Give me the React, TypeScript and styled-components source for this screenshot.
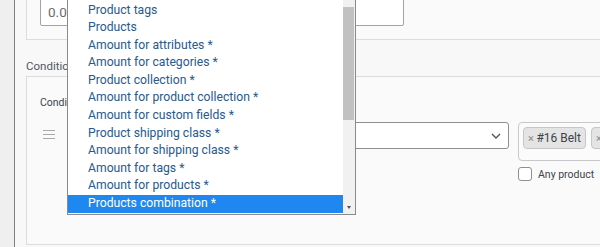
import styled, { createGlobalStyle } from 'styled-components'

const GlobalStyle = createGlobalStyle`
  html, body {
    margin: 0;
    padding: 0;
  }
  body {
    width: 600px;
    height: 247px;
    overflow: hidden;
    background: #efefef;
    font-family: Roboto, "Liberation Sans", sans-serif;
  }
`

const Screen = styled.div`
  position: relative;
  display: flex;
  width: 600px;
  height: 247px;
  overflow: hidden;
`

const Gutter = styled.div`
  flex: 0 0 14px;
  background: #efefef;
  border-right: 1px solid #7f7f7f;
`

const Main = styled.main`
  flex: 1 0 auto;
  min-width: 0;
  padding-left: 11px;
  background: #f8f8f8;
`

const Card = styled.section`
  box-sizing: border-box;
  width: 760px;
  background: #fafafa;
  border: 1px solid #dcdcde;
`

const PriceCard = styled(Card)`
  margin-top: -15px;
  padding: 12px 0 13px 13px;
`

const PriceInput = styled.input`
  box-sizing: border-box;
  display: block;
  width: 364px;
  height: 28px;
  margin: 0;
  padding: 0 7px;
  border: 1px solid #a4a4a4;
  border-radius: 2px;
  background: #fff;
  font-family: Roboto, "Liberation Sans", sans-serif;
  font-size: 13.5px;
  color: #6b6b6b;
  outline: none;
`

const SectionTitle = styled.h3`
  margin: 18px 0 2px;
  font-size: 11.5px;
  line-height: 16px;
  font-weight: 400;
  color: #50575e;
`

const ConditionsCard = styled(Card)`
  height: 169px;
  padding: 18px 0 0 13px;
`

const FieldLabel = styled.div`
  margin-bottom: 11px;
  font-size: 10.5px;
  line-height: 16px;
  color: #3c434a;
`

const ConditionRow = styled.div`
  display: flex;
  align-items: flex-start;
  & > * {
    flex-shrink: 0;
  }
`

const DragHandle = styled.div`
  box-sizing: border-box;
  display: flex;
  align-items: center;
  width: 27px;
  height: 25px;
  padding-left: 3px;
  color: #a7aaad;
`

const SelectBox = styled.div`
  box-sizing: border-box;
  display: flex;
  align-items: center;
  justify-content: flex-end;
  width: 442px;
  height: 27px;
  padding-right: 7px;
  border: 1px solid #8c8f94;
  border-radius: 3px;
  background: #fff;
  color: #50575e;
`

const ProductColumn = styled.div`
  display: flex;
  flex-direction: column;
  margin-left: 9px;
`

const TagBox = styled.div`
  box-sizing: border-box;
  display: flex;
  gap: 5px;
  width: 220px;
  height: 39px;
  padding: 4px;
  border: 1px solid #c8c8cc;
  border-radius: 4px;
  background: #fbfbfb;
  overflow: hidden;
`

const Tag = styled.span`
  box-sizing: border-box;
  display: inline-flex;
  align-items: center;
  flex-shrink: 0;
  height: 22px;
  padding: 0 4px;
  border: 1px solid #c6c6c6;
  border-radius: 4px;
  background: #e4e4e4;
  font-size: 12px;
  color: #3c434a;
  white-space: nowrap;
`

const TagRemove = styled.span`
  margin-right: 2.5px;
  color: #8a8a8a;
  font-size: 11px;
`

const CheckRow = styled.label`
  display: flex;
  align-items: center;
  margin-top: 6px;
  font-size: 10.5px;
  color: #3c434a;
`

const CheckBox = styled.span`
  box-sizing: border-box;
  width: 14px;
  height: 14px;
  margin-right: 6px;
  border: 1px solid #8c8f94;
  border-radius: 3px;
  background: #fff;
`

const OptionsPopup = styled.div`
  position: absolute;
  left: 67px;
  top: 0;
  box-sizing: border-box;
  display: flex;
  width: 289px;
  height: 214.5px;
  border: 1px solid #8a8a8a;
  border-top: none;
  background: #fff;
`

const OptionList = styled.ul`
  flex: 1;
  margin: 0;
  padding: 1.5px 0 0;
  list-style: none;
  overflow: hidden;
`

const Option = styled.li<{ $selected?: boolean }>`
  height: 17.6px;
  padding-left: 20px;
  font-size: 12.2px;
  line-height: 17.6px;
  white-space: nowrap;
  color: ${p => (p.$selected ? '#fff' : '#285a8c')};
  background: ${p => (p.$selected ? '#1e87f0' : 'transparent')};
`

const Scrollbar = styled.div`
  display: flex;
  flex-direction: column;
  width: 12px;
  background: #f1f1f1;
`

const Thumb = styled.div`
  height: 113px;
  margin: 7px 1px 0 0;
  background: #c1c1c1;
`

const ScrollArrow = styled.div`
  display: flex;
  align-items: center;
  justify-content: center;
  height: 12px;
  margin-top: auto;
  &::after {
    content: '';
    border-left: 2.5px solid transparent;
    border-right: 2.5px solid transparent;
    border-top: 3px solid #505050;
  }
`

const options = [
  'Product tags',
  'Products',
  'Amount for attributes *',
  'Amount for categories *',
  'Product collection *',
  'Amount for product collection *',
  'Amount for custom fields *',
  'Product shipping class *',
  'Amount for shipping class *',
  'Amount for tags *',
  'Amount for products *',
  'Products combination *',
]

const HandleIcon = () => (
  <svg width="12" height="9" viewBox="0 0 12 9" fill="none" stroke="currentColor" strokeWidth="1">
    <path d="M0 0.5h12M0 4.5h12M0 8.5h12" />
  </svg>
)

const Chevron = () => (
  <svg width="10" height="6" viewBox="0 0 10 6" fill="none" stroke="currentColor" strokeWidth="1.4">
    <path d="M1 1l4 4 4-4" />
  </svg>
)

export default function App() {
  return (
    <Screen>
      <GlobalStyle />
      <Gutter />
      <Main>
        <PriceCard>
          <PriceInput readOnly value="0.00" />
        </PriceCard>
        <SectionTitle>Conditions</SectionTitle>
        <ConditionsCard>
          <FieldLabel>Condition type</FieldLabel>
          <ConditionRow>
            <DragHandle>
              <HandleIcon />
            </DragHandle>
            <SelectBox>
              <Chevron />
            </SelectBox>
            <ProductColumn>
              <TagBox>
                <Tag>
                  <TagRemove>×</TagRemove>#16 Belt
                </Tag>
                <Tag>
                  <TagRemove>×</TagRemove>#17 Cap
                </Tag>
              </TagBox>
              <CheckRow>
                <CheckBox />
                Any product
              </CheckRow>
            </ProductColumn>
          </ConditionRow>
        </ConditionsCard>
      </Main>
      <OptionsPopup>
        <OptionList>
          {options.map((o, i) => (
            <Option key={o} $selected={i === options.length - 1}>
              {o}
            </Option>
          ))}
        </OptionList>
        <Scrollbar>
          <Thumb />
          <ScrollArrow />
        </Scrollbar>
      </OptionsPopup>
    </Screen>
  )
}
